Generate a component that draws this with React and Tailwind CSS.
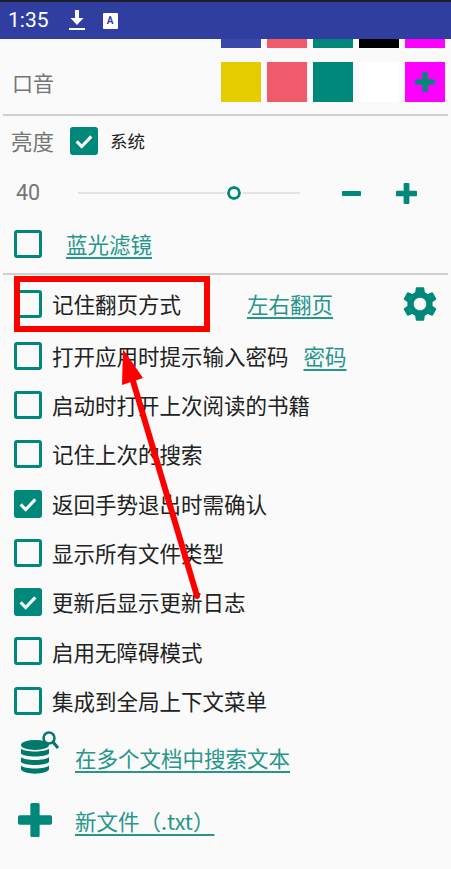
import React from 'react';
import { MdSettings } from 'react-icons/md';

const font = { fontFamily: '"Noto Sans CJK SC", Roboto, sans-serif' };

const Checkbox = ({ checked }) => (
  <div
    className={`flex items-center justify-center w-[28px] h-[28px] rounded-[3px] shrink-0 border-[3px] border-[#00897b] ${
      checked ? 'bg-[#00897b]' : ''
    }`}
  >
    {checked && (
      <svg width="22" height="22" viewBox="0 0 24 24" fill="none" stroke="#fafafa" strokeWidth="3.4">
        <path d="M4 12.5l5.5 5.5L20 7" />
      </svg>
    )}
  </div>
);

const Swatch = ({ color, children, className = 'h-[40px]' }) => (
  <div className={`w-[40px] flex items-center justify-center ${className}`} style={{ backgroundColor: color }}>
    {children}
  </div>
);

const PlusIcon = ({ size = 22 }) => (
  <svg width={size} height={size} viewBox="0 0 22 22" fill="#00897b">
    <rect x="8" y="0" width="6" height="22" rx="1" />
    <rect x="0" y="8" width="22" height="6" rx="1" />
  </svg>
);

const rows = [
  { label: '打开应用时提示输入密码', link: '密码' },
  { label: '启动时打开上次阅读的书籍' },
  { label: '记住上次的搜索' },
  { label: '返回手势退出时需确认', checked: true },
  { label: '显示所有文件类型' },
  { label: '更新后显示更新日志', checked: true },
  { label: '启用无障碍模式' },
  { label: '集成到全局上下文菜单' },
];

export default function App() {
  return (
    <div className="relative w-[451px] h-[869px] overflow-hidden bg-[#fafafa]" style={font}>
      {/* Status bar */}
      <div className="h-[39px] bg-[#303f9f] border-t-[2px] border-[#1c1f2b] flex items-center pl-[8px] text-white">
        <span className="text-[21px] leading-none" style={{ fontFamily: 'Roboto, sans-serif' }}>1:35</span>
        <svg className="ml-[20px]" width="16" height="21" viewBox="0 0 16 21" fill="#fff">
          <path d="M6 0h4v8h4.5L8 15 1.500 8H6z" />
          <rect x="0" y="18" width="16" height="2" />
        </svg>
        <div className="ml-[18px] w-[15px] h-[16px] bg-white rounded-[1px] flex items-center justify-center">
          <span className="text-[10px] leading-none font-bold text-[#303f9f]" style={{ fontFamily: 'Roboto, sans-serif' }}>A</span>
        </div>
      </div>

      {/* Colour swatches */}
      <div className="flex justify-end gap-[6px] pr-[6px]">
        <Swatch color="#3949ab" className="h-[9px]" />
        <Swatch color="#ef5b6b" className="h-[9px]" />
        <Swatch color="#00897b" className="h-[9px]" />
        <Swatch color="#000000" className="h-[9px]" />
        <Swatch color="#ff00ff" className="h-[9px]" />
      </div>
      <div className="flex items-center justify-between pl-[12px] pr-[6px] mt-[14px] h-[40px]">
        <span className="text-[21px] leading-none text-[#757575]">口音</span>
        <div className="flex gap-[6px]">
          <Swatch color="#e4cc00" />
          <Swatch color="#ef5b6b" />
          <Swatch color="#00897b" />
          <Swatch color="#ffffff" />
          <Swatch color="#ff00ff"><PlusIcon size={20} /></Swatch>
        </div>
      </div>
      <div className="mt-[12px] mx-[3px] h-[2px] bg-[#cfcfcf]" />

      {/* Brightness */}
      <div className="flex items-center pl-[11px] h-[28px] mt-[11px]">
        <span className="text-[21.5px] leading-none text-[#757575] w-[59px]">亮度</span>
        <Checkbox checked />
        <span className="ml-[12px] text-[17.5px] leading-none text-[#212121]">系统</span>
      </div>
      <div className="flex items-center h-[30px] mt-[23px] pl-[16px]">
        <span className="w-[62px] text-[21.5px] leading-none text-[#757575]" style={{ fontFamily: 'Roboto, sans-serif' }}>40</span>
        <div className="relative w-[222px] h-[2px] bg-[#e3e3e3]">
          <div className="absolute left-[149px] top-[-6px] w-[14px] h-[14px] rounded-full border-[3px] border-[#00897b] bg-[#fafafa] outline-[2px] outline-[#fafafa]" />
        </div>
        <div className="ml-[42px] w-[19px] h-[5px] rounded-[1px] bg-[#00897b]" />
        <div className="ml-[35px]"><PlusIcon size={21} /></div>
      </div>
      <div className="flex items-center h-[28px] mt-[22px] pl-[14px]">
        <Checkbox />
        <span className="ml-[24px] text-[21.5px] leading-none text-[#26958a] underline underline-offset-[4px]">蓝光滤镜</span>
      </div>
      <div className="mt-[15px] mx-[3px] h-[2px] bg-[#cfcfcf]" />

      {/* Options */}
      <div className="flex items-center h-[28px] mt-[15px] pl-[14px]">
        <Checkbox />
        <span className="ml-[10px] text-[21.5px] leading-none text-[#212121] w-[195px]">记住翻页方式</span>
        <span className="text-[21.5px] leading-none text-[#26958a] underline underline-offset-[4px]">左右翻页</span>
        <MdSettings className="ml-auto mr-[10px]" size={42} color="#00897b" />
      </div>
      <div className="mt-[13px] pl-[14px] flex flex-col">
        {rows.map(({ label, link, checked }) => (
          <div key={label} className="flex items-center h-[49.3px]">
            <Checkbox checked={checked} />
            <span className="ml-[10px] text-[21.5px] leading-none text-[#212121]">{label}</span>
            {link && (
              <span className="ml-[15px] text-[21.5px] leading-none text-[#26958a] underline underline-offset-[4px]">{link}</span>
            )}
          </div>
        ))}
      </div>

      {/* Links */}
      <div className="flex items-center h-[42px] mt-[11px] pl-[20px]">
        <svg className="mb-[8px] shrink-0" width="40" height="44" viewBox="0 0 40 44" fill="#00796b">
          <ellipse cx="15" cy="14" rx="14" ry="5" />
          <path d="M1 17.500c3 4 25 4 28 0v5c-3 4-25 4-28 0zM1 26c3 4 25 4 28 0v5c-3 4-25 4-28 0zM1 34.500c3 4 25 4 28 0v4c-3 5.500-25 5.500-28 0z" />
          <circle cx="29" cy="7" r="5.500" fill="#fafafa" stroke="#00796b" strokeWidth="2.500" />
          <path d="M33 11l5 6" stroke="#00796b" strokeWidth="3" />
        </svg>
        <span className="ml-[15px] text-[21.5px] leading-none text-[#26958a] underline underline-offset-[4px]">在多个文档中搜索文本</span>
      </div>
      <div className="flex items-center h-[34px] mt-[25px] pl-[18px]">
        <PlusIcon size={34} />
        <span className="ml-[23px] text-[21.5px] leading-none text-[#26958a] underline underline-offset-[4px]">新文件（.txt）</span>
      </div>

      {/* Annotation overlay */}
      <div className="absolute left-[14px] top-[276px] w-[196px] h-[56px] border-[6px] border-[#ff0000]" />
      <svg className="absolute left-0 top-0 pointer-events-none" width="451" height="869">
        <path d="M197 596L133 381" stroke="#ff0000" strokeWidth="6" strokeLinecap="round" fill="none" />
        <path d="M123 349L143 378L122 385z" fill="#ff0000" />
      </svg>
    </div>
  );
}
